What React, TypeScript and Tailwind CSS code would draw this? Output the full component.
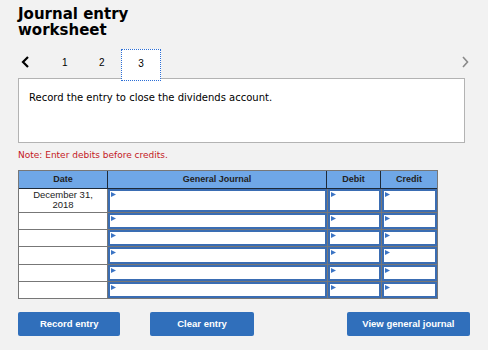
import React from "react";

const Tri = () => (
  <svg width="5" height="5" viewBox="0 0 5 5" className="absolute left-[1px] top-[1px]">
    <polygon points="0,0 5,2.5 0,5" fill="#3b74c4" />
  </svg>
);

const InCell = ({ w }: { w: string }) => (
  <div className={`${w} h-full bg-[#777] flex`}>
    <div className="relative flex-1 bg-white border-2 border-[#3a6db3]">
      <Tri />
    </div>
  </div>
);

export default function App() {
  const rows = [23, 17, 17, 18, 17, 17];
  return (
    <div className="w-[488px] h-[350px] bg-[#f2f2f2] px-[18px] pt-[6px] font-['DejaVu_Sans',sans-serif] text-black overflow-hidden">
      <div className="text-[15px] font-bold leading-[16px] w-[130px]">Journal entry worksheet</div>
      <div className="relative mt-[11px] h-[30px] border-b border-[#b3b3b3] w-[447px]">
        <svg width="9" height="12" viewBox="0 0 9 12" className="absolute left-[3px] top-[7px]">
          <path d="M7 1 L2 6 L7 11" stroke="#000" strokeWidth="2.2" fill="none" />
        </svg>
        <span className="absolute left-[44px] top-[8px] text-[10px] leading-[12px] font-['Liberation_Sans',sans-serif]">1</span>
        <span className="absolute left-[81px] top-[8px] text-[10px] leading-[12px] font-['Liberation_Sans',sans-serif]">2</span>
        <div className="absolute left-[103px] top-0 w-[40px] h-[32px] bg-white border border-dotted border-[#2b6ed6] flex justify-center pt-[8px] text-[10px] leading-[12px] font-['Liberation_Sans',sans-serif]">3</div>
        <svg width="8" height="12" viewBox="0 0 8 12" className="absolute left-[443px] top-[7px]">
          <path d="M2 1 L6.5 6 L2 11" stroke="#8a8a8a" strokeWidth="1.6" fill="none" />
        </svg>
      </div>
      <div className="w-[447px] h-[64px] bg-white border border-[#b3b3b3] border-t-0 px-[10px] pt-[11px] text-[10px]">
        Record the entry to close the dividends account.
      </div>
      <div className="mt-[6px] text-[9px] leading-[12px] text-[#c4181e]">Note: Enter debits before credits.</div>
      <div className="mt-[9px] w-[420px] border border-[#777] font-['Liberation_Sans',sans-serif]">
        <div className="flex h-[18px] bg-[#6fa7e7] text-[9px] font-bold text-[#222] border-b border-[#1e2a38]">
          <div className="w-[89px] flex items-center justify-center border-r border-[#1e2a38]">Date</div>
          <div className="w-[219px] flex items-center justify-center border-r border-[#1e2a38]">General Journal</div>
          <div className="w-[54px] flex items-center justify-center border-r border-[#1e2a38]">Debit</div>
          <div className="flex-1 flex items-center justify-center">Credit</div>
        </div>
        {rows.map((h, i) => (
          <div key={i} className={`flex ${i > 0 ? "border-t border-[#777]" : ""}`} style={{ height: h }}>
            <div className="w-[89px] h-full bg-white border-r border-[#777] text-[9.5px] leading-[10px] text-center text-[#222] pt-[1px]">
              {i === 0 ? (
                <>
                  December 31,
                  <br />
                  2018
                </>
              ) : null}
            </div>
            <InCell w="w-[219px]" />
            <div className="w-[1px] h-full bg-[#777]" />
            <InCell w="w-[53px]" />
            <div className="w-[1px] h-full bg-[#777]" />
            <InCell w="flex-1" />
          </div>
        ))}
      </div>
      <div className="mt-[13px] flex font-['Liberation_Sans',sans-serif] text-[9.5px] font-bold text-white">
        <button className="w-[103px] h-[24px] bg-[#306fbb] rounded-[2px]">Record entry</button>
        <button className="ml-[30px] w-[104px] h-[24px] bg-[#306fbb] rounded-[2px]">Clear entry</button>
        <button className="ml-[93px] w-[124px] h-[24px] bg-[#306fbb] rounded-[2px]">View general journal</button>
      </div>
    </div>
  );
}
